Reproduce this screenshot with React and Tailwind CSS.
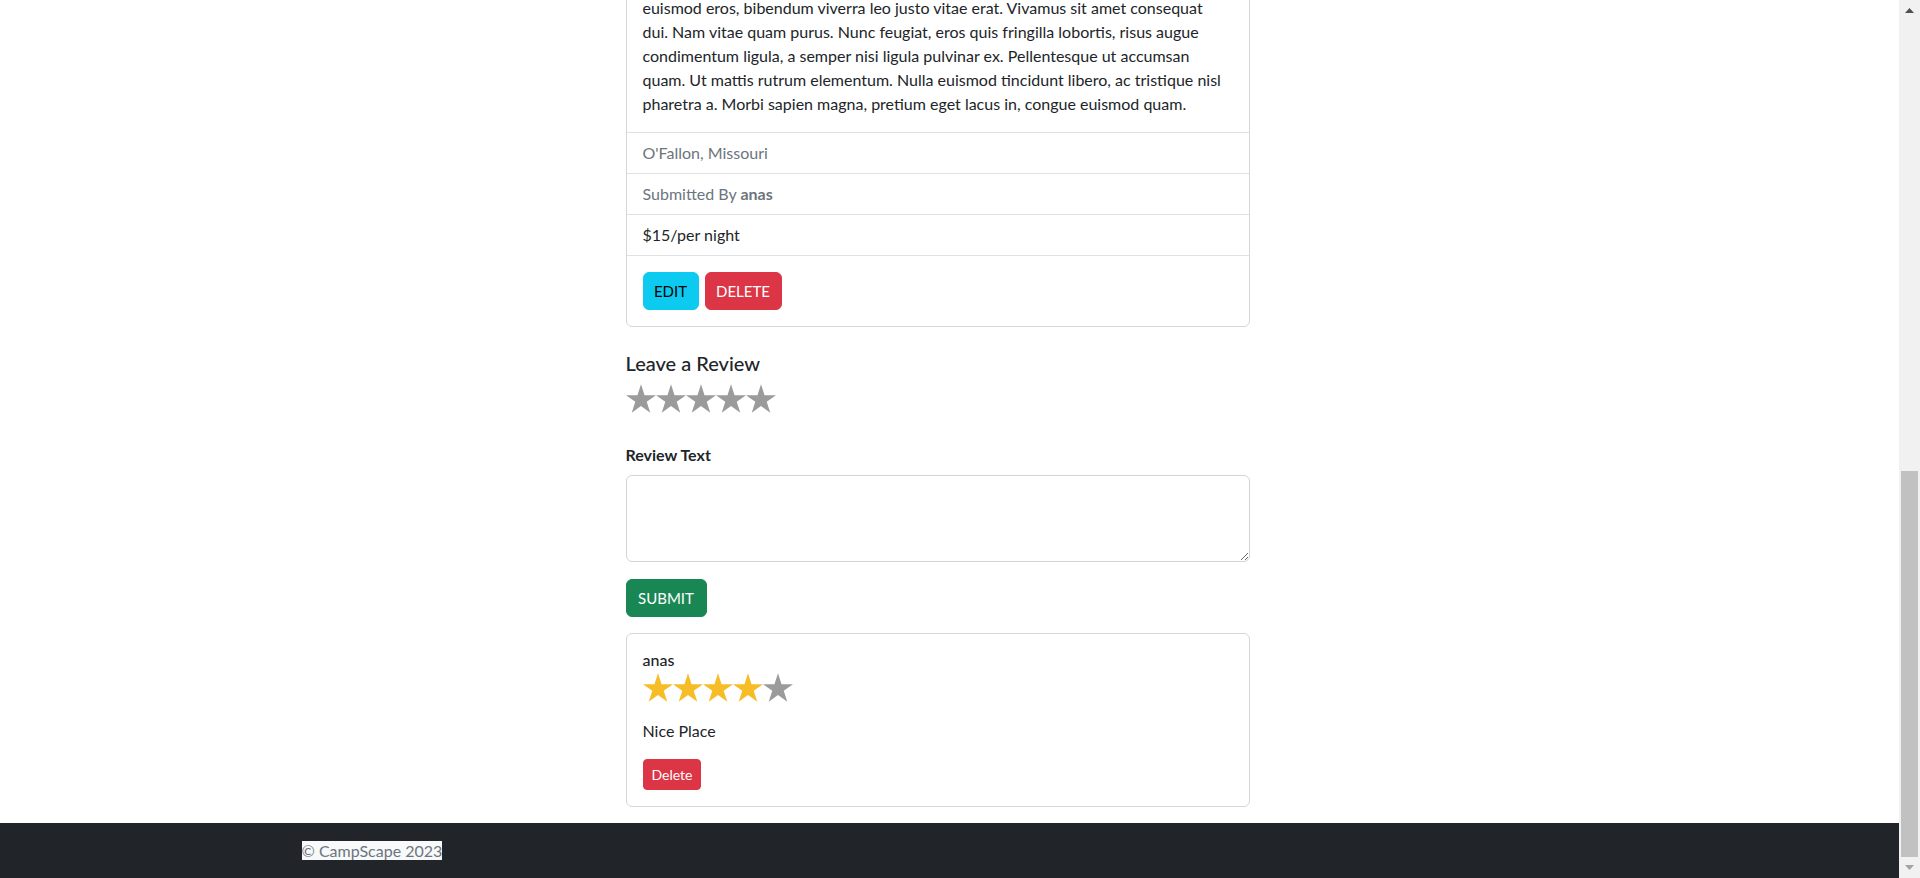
import React from "react";

const STAR = "15,0.23 18.54,11.13 30,11.13 20.73,17.86 24.27,28.76 15,22.02 5.73,28.76 9.27,17.86 0,11.13 11.46,11.13";

const Star = ({ on }) => (
    <svg width="30" height="30" viewBox="0 0 30 30" className="block shrink-0">
        <polygon points={STAR} fill={on ? "#f6bd27" : "#9b9b9b"} />
    </svg>
);

const Stars = ({ value, className }) => (
    <div className={`flex ${className}`}>
        {[1, 2, 3, 4, 5].map(n => <Star key={n} on={n <= value} />)}
    </div>
);

const lines = [
    "euismod eros, bibendum viverra leo justo vitae erat. Vivamus sit amet consequat",
    "dui. Nam vitae quam purus. Nunc feugiat, eros quis fringilla lobortis, risus augue",
    "condimentum ligula, a semper nisi ligula pulvinar ex. Pellentesque ut accumsan",
    "quam. Ut mattis rutrum elementum. Nulla euismod tincidunt libero, ac tristique nisl",
    "pharetra a. Morbi sapien magna, pretium eget lacus in, congue euismod quam.",
];

function Scrollbar() {
    // fake windows scrollbar, page is scrolled to the bottom
    return (
        <div className="w-[21px] shrink-0 bg-[#f1f1f1] flex flex-col">
            <div className="h-[21px] flex items-center justify-center">
                <svg width="9" height="5" viewBox="0 0 9 5"><polygon points="4.5,0 9,5 0,5" fill="#505050" /></svg>
            </div>
            <div className="flex-1 flex flex-col justify-end px-[2px]">
                <div className="h-[386px] bg-[#c1c1c1]" />
            </div>
            <div className="h-[21px] flex items-center justify-center">
                <svg width="9" height="5" viewBox="0 0 9 5"><polygon points="0,0 9,0 4.5,5" fill="#a3a3a3" /></svg>
            </div>
        </div>
    );
}

export default function App() {
    return (
        <div className="flex h-[878px] w-[1920px] overflow-hidden bg-white text-[#212529] font-['Lato',sans-serif] text-base leading-6">
            <div className="flex-1 flex flex-col min-w-0">
                <main className="flex-1 min-h-0">
                    <div className="max-w-[1320px] mx-auto px-3">
                        <div className="ml-[25%] w-[624px]">
                            {/* campground card */}
                            <div className="-mt-[21px] mb-[24px] rounded-md border border-[#d6d6d6] bg-white">
                                <div className="p-4">
                                    <p>
                                        {lines.map(l => <span key={l} className="block whitespace-nowrap">{l}</span>)}
                                    </p>
                                </div>
                                <ul>
                                    <li className="border-t border-[#dee2e6] px-4 py-2 text-[#6c757d]">O'Fallon, Missouri</li>
                                    <li className="border-t border-[#dee2e6] px-4 py-2 text-[#6c757d]">Submitted By <b className="font-bold">anas</b></li>
                                    <li className="border-t border-[#dee2e6] px-4 py-2">$15/per night</li>
                                </ul>
                                <div className="border-t border-[#dee2e6] p-4 flex gap-[6px]">
                                    <button className="w-[56px] rounded-md border border-[#0dcaf0] bg-[#0dcaf0] py-1.5 text-center text-[15px] text-black uppercase">Edit</button>
                                    <button className="w-[77px] rounded-md border border-[#dc3545] bg-[#dc3545] py-1.5 text-center text-[15px] text-white uppercase">Delete</button>
                                </div>
                            </div>

                            {/* review form */}
                            <h5 className="text-[20px] font-medium leading-6 mb-[9px]">Leave a Review</h5>
                            <Stars value={0} className="mb-[29px]" />
                            <label className="block font-bold mb-2">Review Text</label>
                            <textarea rows={3} className="block w-full h-[87px] rounded-md border border-[#d4d4d4] px-3 py-1.5 mb-[17px] outline-none" />
                            <button className="w-[81px] rounded-md border border-[#198754] bg-[#198754] py-1.5 text-center text-[15px] text-white uppercase mb-4">Submit</button>

                            {/* reviews */}
                            <div className="rounded-md border border-[#d6d6d6] p-4 mb-4">
                                <h6 className="font-medium text-base leading-[19px] mb-1">anas</h6>
                                <Stars value={4} className="mb-4" />
                                <p className="mb-4">Nice Place</p>
                                <button className="rounded border border-[#dc3545] bg-[#dc3545] px-2 py-1 text-sm leading-[21px] text-white">Delete</button>
                            </div>
                        </div>
                    </div>
                </main>
                <footer className="h-[55px] shrink-0 bg-[#212529] py-4">
                    <div className="max-w-[1320px] mx-auto px-3">
                        <span className="bg-[#f8f9fa] text-[#6c757d]">&copy; CampScape 2023</span>
                    </div>
                </footer>
            </div>
            <Scrollbar />
        </div>
    );
}
